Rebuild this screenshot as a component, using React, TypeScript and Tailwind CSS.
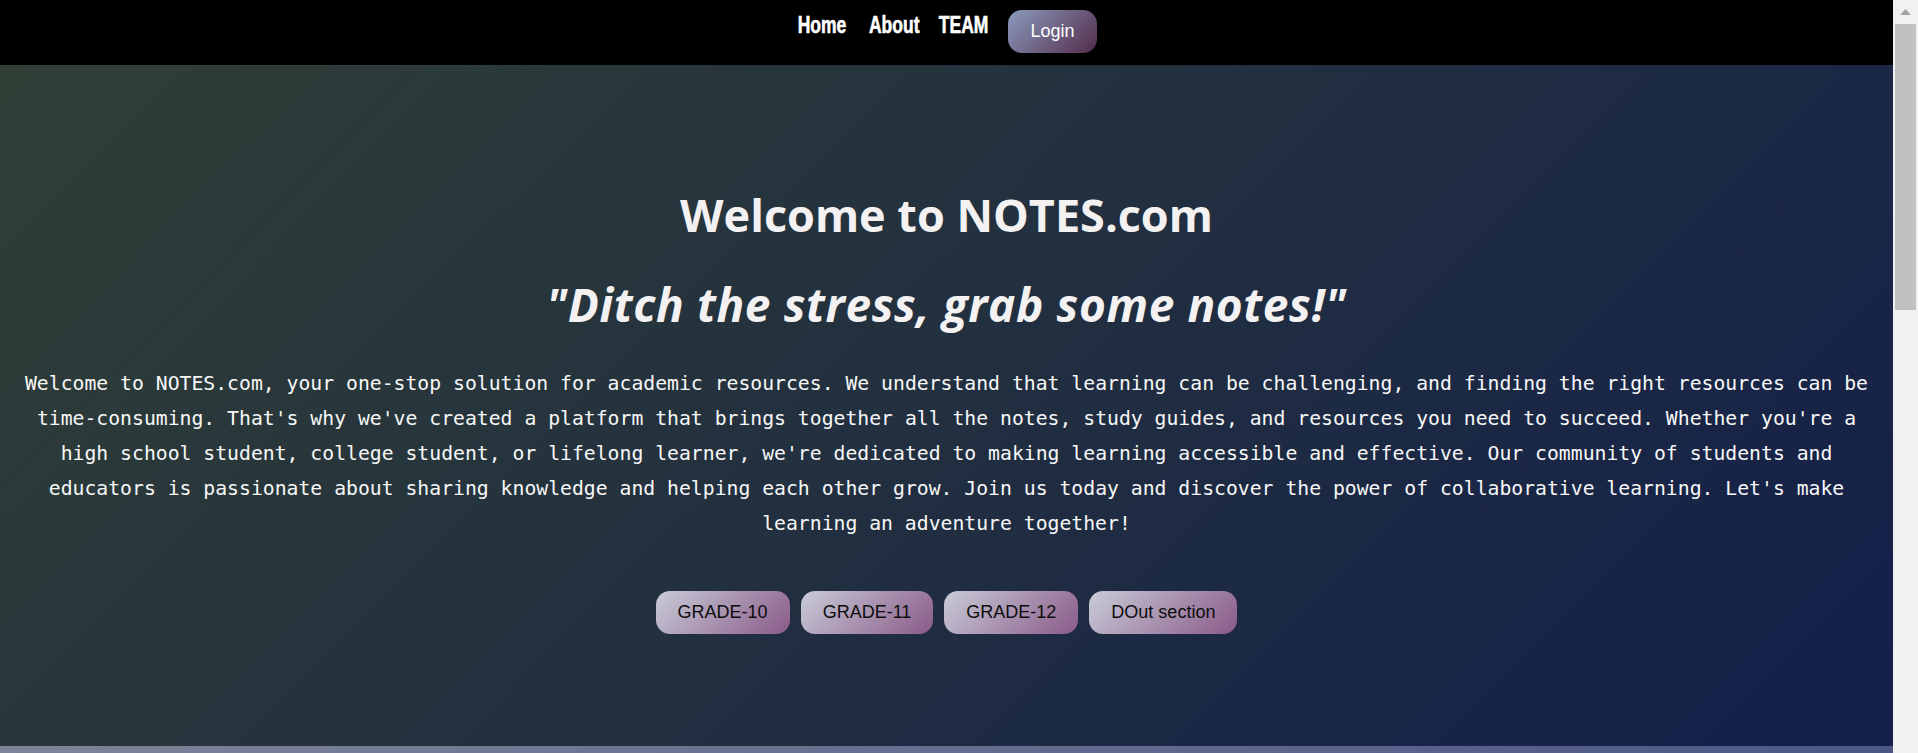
import React from "react";

const NAV_LINKS = [
  { label: "Home", width: "w-[50px]" },
  { label: "About", width: "w-[51px]" },
  { label: "TEAM", width: "w-[45px]" },
];
const GRADES = ["GRADE-10", "GRADE-11", "GRADE-12", "DOut section"];

const INTRO =
  "Welcome to NOTES.com, your one-stop solution for academic resources. We understand that learning can be challenging, and finding the right resources can be time-consuming. That's why we've created a platform that brings together all the notes, study guides, and resources you need to succeed. Whether you're a high school student, college student, or lifelong learner, we're dedicated to making learning accessible and effective. Our community of students and educators is passionate about sharing knowledge and helping each other grow. Join us today and discover the power of collaborative learning. Let's make learning an adventure together!";

/** Pill button used for Login and the grade shortcuts. */
function PillButton({
  children,
  variant = "grade",
}: {
  children: React.ReactNode;
  variant?: "login" | "grade";
}) {
  return (
    <button
      className={
        variant === "login"
          ? "h-[43px] rounded-[14px] bg-[linear-gradient(135deg,#8b9bbd,#532c4a)] px-[22px] font-['Liberation_Sans',Arial,sans-serif] text-[18px] text-white"
          : "h-[43px] rounded-[14px] bg-[linear-gradient(135deg,#c8ccd8,#8a5a88)] px-[22px] font-['Liberation_Sans',Arial,sans-serif] text-[18px] text-[#0d0d0d]"
      }
      type="button"
    >
      {children}
    </button>
  );
}

/** Static page scrollbar, drawn because the capture hides the real one. */
function FakeScrollbar() {
  return (
    <div aria-hidden className="flex w-[25px] shrink-0 flex-col bg-[#f1f1f1]">
      <div className="flex h-[24px] items-center justify-center">
        <svg height="6" viewBox="0 0 11 6" width="11">
          <path d="M5.5 0 11 6H0z" fill="#a3a3a3" />
        </svg>
      </div>
      <div className="mx-[2px] h-[286px] bg-[#c1c1c1]" />
    </div>
  );
}

export default function App() {
  return (
    <div className="flex h-screen overflow-hidden bg-[#f1f1f1]">
      <main className="min-w-0 flex-1">
        <nav className="flex h-[65px] items-start justify-center gap-[22px] bg-black pt-[10px]">
          {NAV_LINKS.map((link) => (
            <a
              className={`mt-[4px] flex justify-center ${link.width}`}
              href="#"
              key={link.label}
            >
              {/* Impact is not installed: squeeze a heavy sans to match its shape. */}
              <span className="origin-center scale-x-[0.76] font-['Impact','Liberation_Sans',Arial,sans-serif] text-[23px] leading-none font-bold whitespace-nowrap text-white [-webkit-text-stroke:0.6px_white]">
                {link.label}
              </span>
            </a>
          ))}
          <PillButton variant="login">Login</PillButton>
        </nav>

        <section className="flex h-[681px] flex-col items-center bg-[linear-gradient(135deg,#303f36,#131f4a)] pt-[127px] text-[#f3f1f1]">
          <h1 className="font-['Comic_Sans_MS','Open_Sans',sans-serif] text-[45px] leading-none font-bold">
            Welcome to NOTES.com
          </h1>
          <h2 className="mt-[44px] font-['Comic_Sans_MS','Open_Sans',sans-serif] text-[46px] leading-none font-bold tracking-[0.6px] italic">
            "Ditch the stress, grab some notes!"
          </h2>
          <p className="mt-[39px] w-[1848px] text-center font-['DejaVu_Sans_Mono',Consolas,monospace] text-[19.75px] leading-[35px] text-[#f7f7f7]">
            {INTRO}
          </p>
          <div className="mt-[50px] flex gap-[11px]">
            {GRADES.map((grade) => (
              <PillButton key={grade}>{grade}</PillButton>
            ))}
          </div>
        </section>

        <section className="h-[1150px] bg-[linear-gradient(135deg,#7e8498,#2d3b7c)]" />
      </main>
      <FakeScrollbar />
    </div>
  );
}
